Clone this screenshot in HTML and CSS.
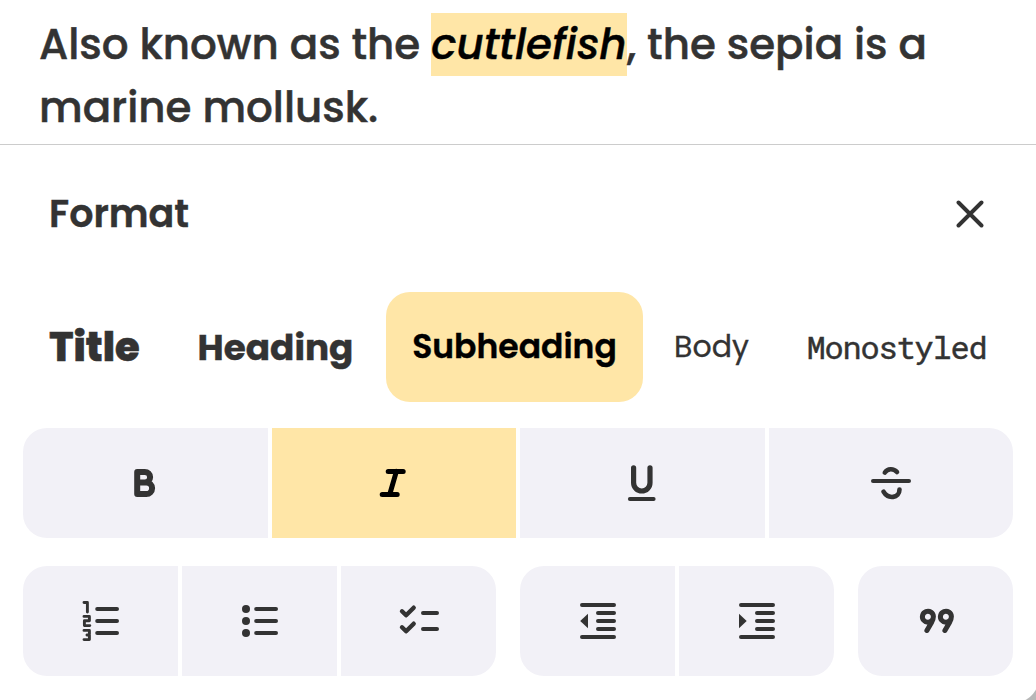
FILE: index.html
```html
<!DOCTYPE html>
<html lang="en">
<head>
<meta charset="utf-8">
<title>Format</title>
<link rel="stylesheet" href="styles.css">
</head>
<body>
<main class="screen">
  <p class="note">Also known as the <mark class="selected">cuttlefish</mark>, the sepia is a<br>marine mollusk.</p>
  <section class="panel">
    <header class="panel-head">
      <h2 class="panel-title">Format</h2>
      <svg class="close" viewBox="0 0 28 28"><path d="M2.5 2.5L25.5 25.5M25.5 2.5L2.5 25.5"/></svg>
    </header>
    <nav class="styles">
      <div class="style title"><span>Title</span></div>
      <div class="style heading"><span>Heading</span></div>
      <div class="style subheading active"><span>Subheading</span></div>
      <div class="style body"><span>Body</span></div>
      <div class="style mono"><span>Monostyled</span></div>
    </nav>
    <div class="row">
      <div class="group wide">
        <div class="tool"><svg class="icon" viewBox="-0.5 0 44 44"><path stroke-width="6" stroke-linejoin="round" d="M13.7 10.9H21.3a5.2 5.2 0 0 1 0 10.6H13.7M21.3 21.5H22.8a5.8 5.8 0 0 1 0 11.6H13.7V10.9"/></svg></div>
        <div class="tool active"><svg class="icon" viewBox="0.3 0 44 44"><path stroke-width="5" d="M16.5 10.4H31.5M10.5 33.5H25.5M24.7 10.4L18 33.5"/></svg></div>
        <div class="tool"><svg class="icon" viewBox="-0.3 0 44 44"><path stroke-width="5.2" d="M13.3 6.8V21.8a8.2 8.2 0 0 0 16.4 0V6.8"/><path d="M9.6 38H33.3"/></svg></div>
        <div class="tool"><svg class="icon" viewBox="0 0 44 44"><path d="M4 20H40"/><path stroke-width="4.6" d="M15.8 11.6C18.5 7.3 24.5 7 28 11.1M14.5 30.7C19 38.5 30.5 37.5 30.5 28.5"/></svg></div>
      </div>
    </div>
    <div class="row lists">
      <div class="group three">
        <div class="tool"><svg class="icon" viewBox="0 0 44 44"><path d="M19.2 10H39M19.2 22H39M19.2 34H39"/><path class="digit" d="M6 3.5H9.4V13M6 17.4H11.4V21.7H6.4V26.6H11.8M6 31.4H11.4V35.2L9 36H11.4V40.6H6"/></svg></div>
        <div class="tool"><svg class="icon" viewBox="0 0 44 44"><path d="M19.2 10H39M19.2 22H39M19.2 34H39"/><g class="solid"><circle cx="9" cy="10" r="4"/><circle cx="9" cy="22" r="4"/><circle cx="9" cy="34" r="4"/></g></svg></div>
        <div class="tool"><svg class="icon" viewBox="0 0 44 44"><path d="M27 14H41M27 30H41"/><path stroke-width="4.4" d="M6 12.3L10.1 16.3L17.7 8.7M6 28.3L10.1 32.3L17.7 24.7"/></svg></div>
      </div>
      <div class="group two">
        <div class="tool"><svg class="icon" viewBox="0 0 44 44"><path d="M7 6H39M23 14H39M23 22H39M23 30H39M7 38H39"/><path class="solid" d="M5.2 22L13 14.8V29.2Z"/></svg></div>
        <div class="tool"><svg class="icon" viewBox="0 0 44 44"><path d="M7 6H39M23 14H39M23 22H39M23 30H39M7 38H39"/><path class="solid" d="M12.7 22L5 14.8V29.2Z"/></svg></div>
      </div>
      <div class="group one">
        <div class="tool"><svg class="icon" viewBox="-0.4 0 44 44"><path stroke-width="5" d="M19.2 20.6A5.5 5.5 0 1 1 20 17.6Q20 20 18.3 23.2L13.5 31.5M37.2 20.6A5.5 5.5 0 1 1 38 17.6Q38 20 36.3 23.2L31.5 31.5"/></svg></div>
      </div>
    </div>
  </section>
  <div class="corner"></div>
</main>
</body>
</html>
```

FILE: styles.css
```css
* { box-sizing: border-box; }
body { margin: 0; background: #fff; color: #333; font-family: Poppins, Inter, sans-serif; }
.screen { position: relative; width: 1036px; height: 700px; overflow: hidden; }
.note { margin: 0; height: 145px; padding: 13px 39px 0; border-bottom: 1px solid #ccc; font-size: 42px; line-height: 63px; font-weight: 500; white-space: nowrap; -webkit-text-stroke: 0.5px currentColor; }
.selected { display: inline-block; height: 63px; background: #ffe6a7; color: #000; font-style: italic; }
.panel { padding: 0 23px; }
.panel-head { display: flex; align-items: center; justify-content: space-between; height: 138px; padding: 0 29px 0 26px; }
.panel-title { margin: 0; padding-bottom: 2px; font-size: 38px; font-weight: 600; -webkit-text-stroke: 0.4px #333; }
.close { width: 28px; height: 28px; fill: none; stroke: #333; stroke-width: 3.9; stroke-linecap: round; }
.styles { display: grid; grid-template-columns: 143px 207px 257px 126px 233px; column-gap: 6px; height: 110px; margin: 9px 0 0; }
.style { display: flex; align-items: center; justify-content: center; border-radius: 24px; white-space: nowrap; }
.title { font-size: 40px; font-weight: 800; -webkit-text-stroke: 0.6px #333; }
.heading { font-size: 35.8px; font-weight: 700; -webkit-text-stroke: 0.4px #333; }
.subheading { width: 257px; margin-left: 1px; font-size: 33px; font-weight: 600; -webkit-text-stroke: 0.4px #000; }
.body { margin-left: 1px; font-size: 30px; -webkit-text-stroke: 0.3px #333; }
.mono { padding: 0 0 2px; font-family: "Roboto Mono", "Liberation Mono", monospace; font-size: 32px; letter-spacing: -1.2px; -webkit-text-stroke: 0.4px #333; }
.active { background: #ffe6a7; color: #000; }
.row { display: flex; gap: 24px; margin-top: 26px; }
.row + .row { margin-top: 28px; }
.group { display: grid; gap: 4px; height: 110px; border-radius: 24px; overflow: hidden; }
.wide { width: 990px; grid-template-columns: repeat(4, 1fr); }
.three { width: 473px; grid-template-columns: repeat(3, 1fr); }
.two { width: 314px; grid-template-columns: repeat(2, 1fr); }
.one { width: 155px; }
.tool { display: flex; align-items: center; justify-content: center; background: #f2f1f7; }
.tool.active { background: #ffe6a7; }
.icon { width: 44px; height: 44px; fill: none; stroke: currentColor; stroke-width: 4; stroke-linecap: round; stroke-linejoin: round; }
.lists .icon { margin-right: 1px; }
.solid { fill: currentColor; stroke: none; }
.digit { stroke-width: 2.9; }
.corner { position: absolute; right: 0; bottom: 0; width: 24px; height: 24px; background: radial-gradient(circle at 0 0, transparent 27px, #b8b8b8 28px); }
```
